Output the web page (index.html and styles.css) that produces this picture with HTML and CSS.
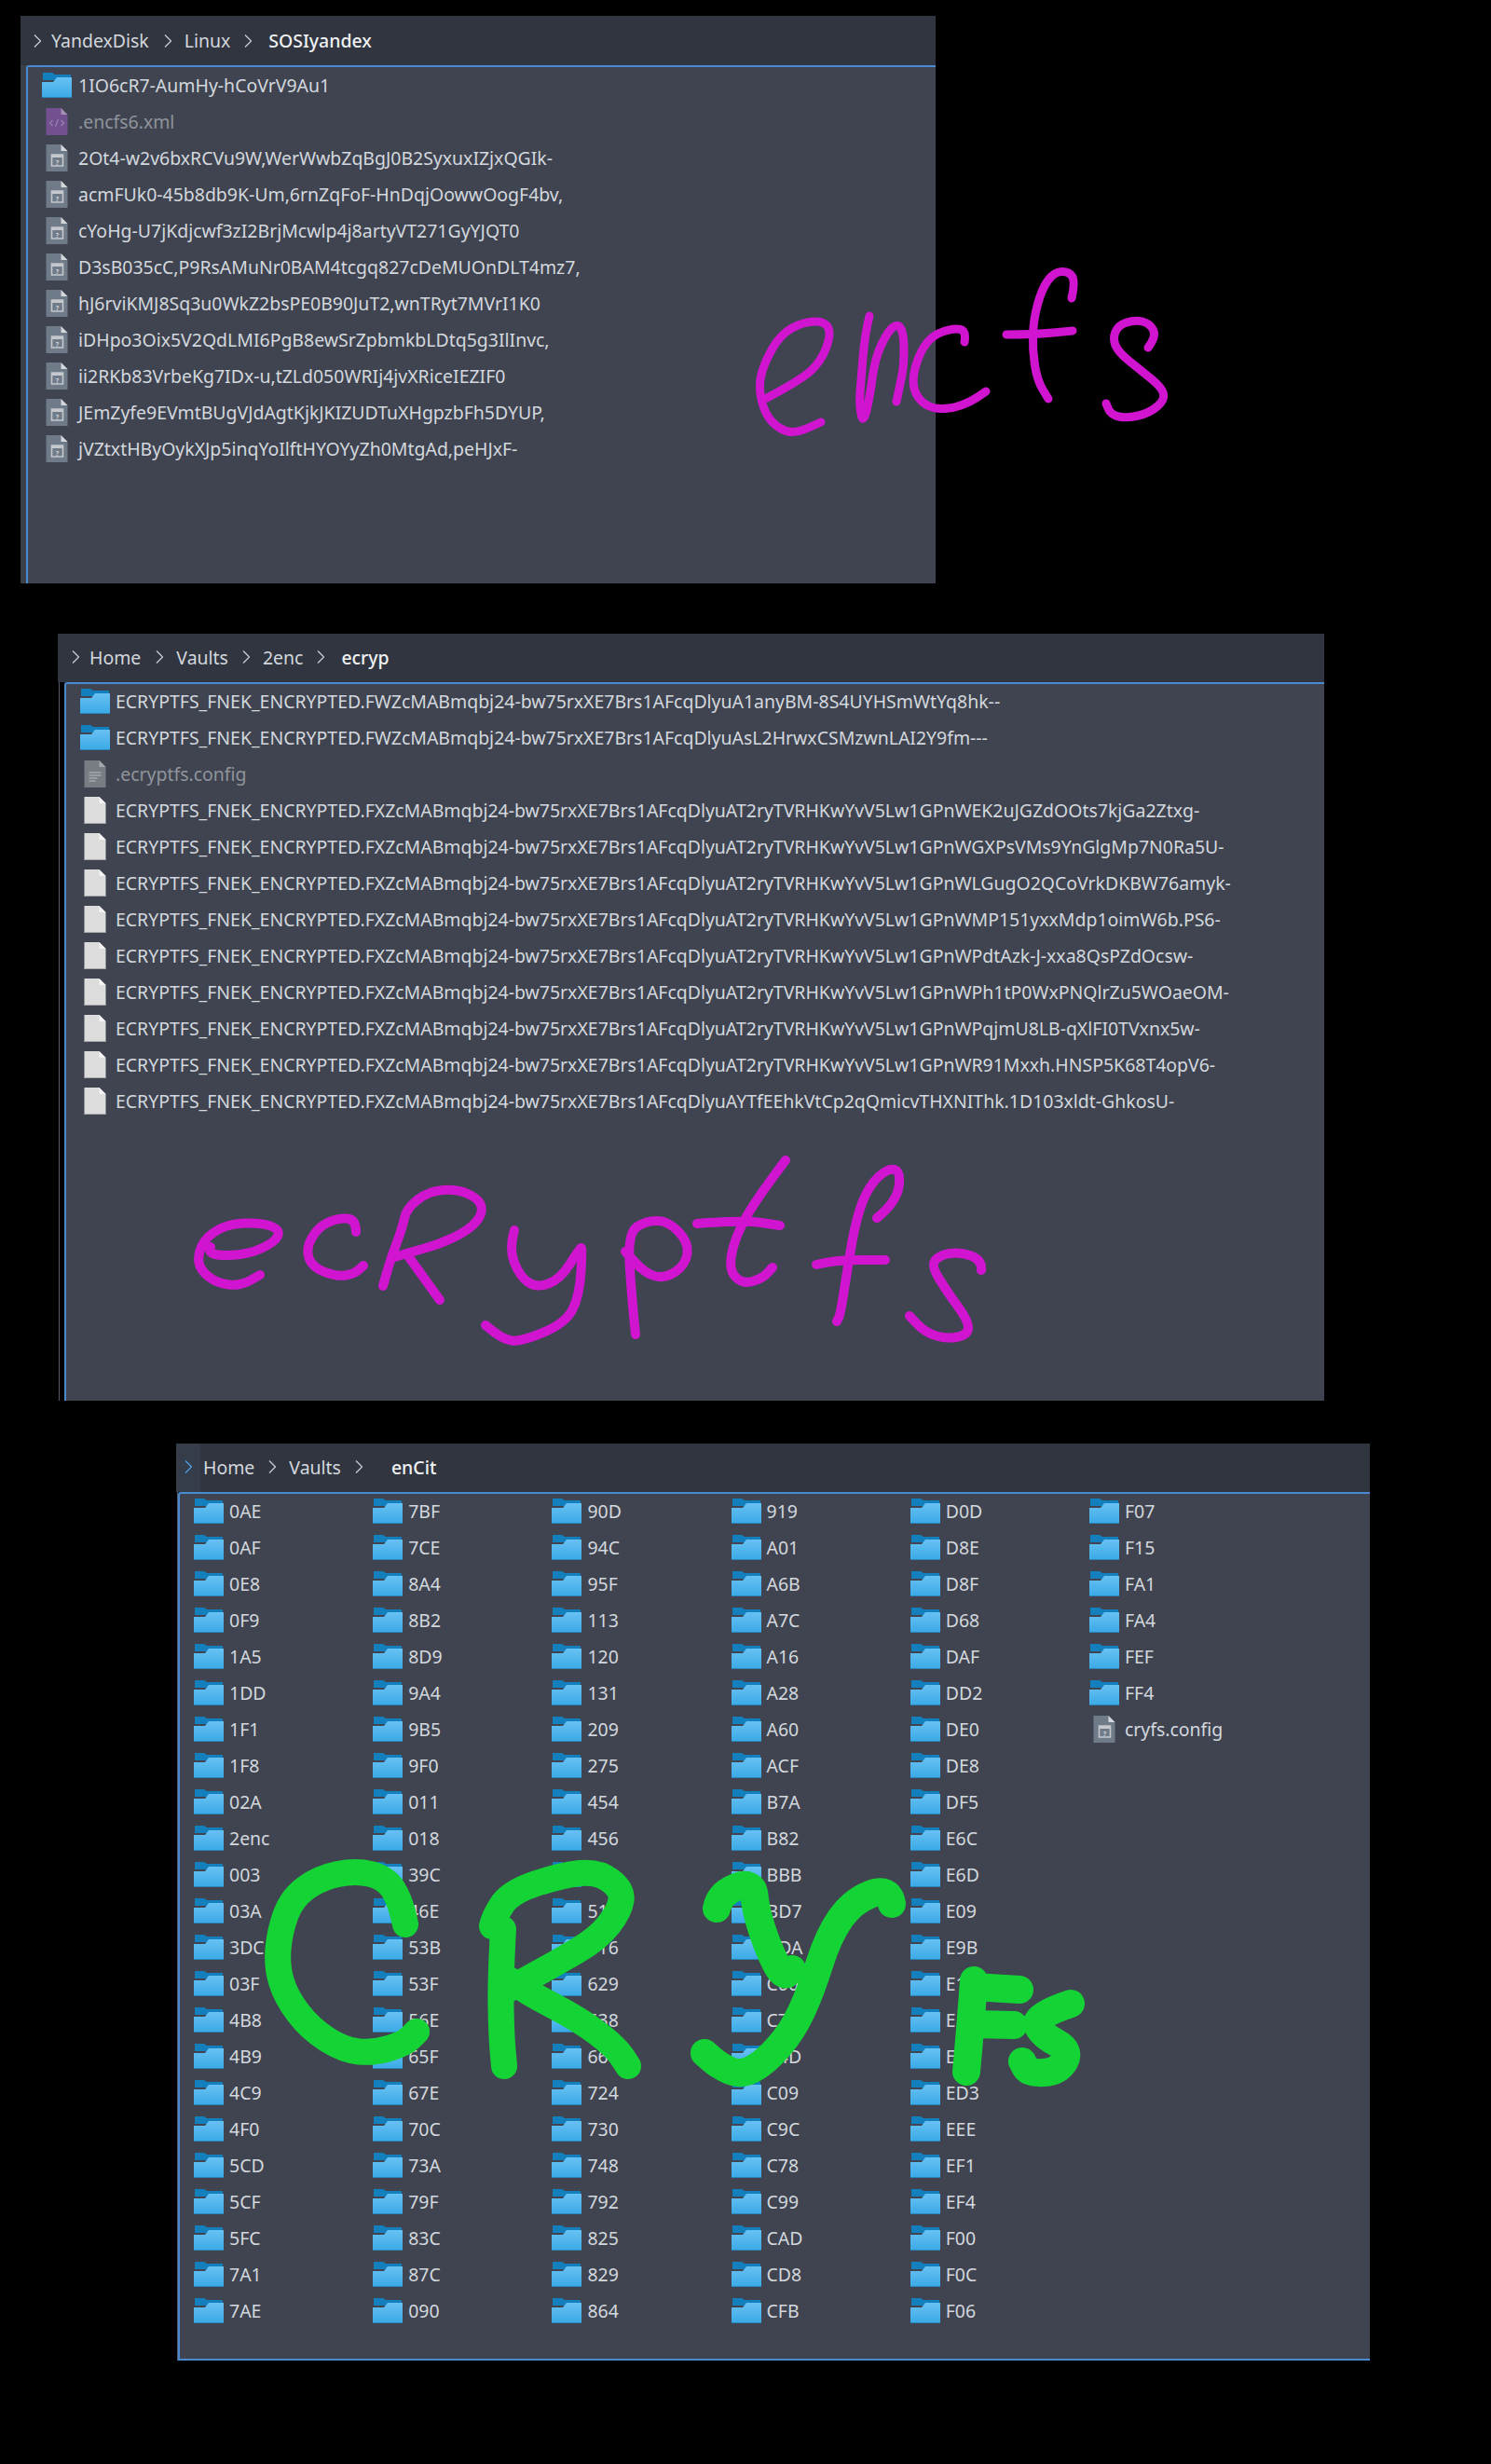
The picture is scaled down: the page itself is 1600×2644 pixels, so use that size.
FILE: index.html
```html
<!DOCTYPE html>
<html lang="en">

<head>
  <meta charset="UTF-8" />
  <title>encfs ecryptfs cryfs</title>
  <link rel="stylesheet" href="styles.css">
</head>

<body>
  <svg class="defs" width="0" height="0">
    <defs>
      <linearGradient id="folder-front" x1="0" y1="0" x2="0" y2="1">
        <stop offset="0" stop-color="#68c1f3" />
        <stop offset="1" stop-color="#3aa9e6" />
      </linearGradient>
      <symbol id="folder" viewBox="0 0 32 27">
        <path d="M1 0H11L14 2H31V8H1Z" fill="#147fbd" />
        <path d="M0 10H12L16 5H32V27H0Z" fill="url(#folder-front)" />
        <path d="M0 26H32V27H0Z" fill="#2b86bb" />
      </symbol>
      <symbol id="file-unknown" viewBox="0 0 23 29">
        <path d="M0 0H16L23 7V29H0Z" fill="#6f7b89" />
        <path d="M16 0L23 7H16Z" fill="#d3d6da" />
        <path d="M6 11H18V23H6Z" fill="none" stroke="#c4c8cd" stroke-width="1.6" />
        <path d="M6 11H18V14H6Z" fill="#c4c8cd" />
        <text x="12" y="21.5" font-size="7" font-weight="700" text-anchor="middle" fill="#d3d6da" font-family="Noto Sans, sans-serif">?</text>
      </symbol>
      <symbol id="file-xml" viewBox="0 0 23 29">
        <path d="M0 0H16L23 7V29H0Z" fill="#73508f" />
        <path d="M16 0L23 7H16Z" fill="#a48fb6" />
        <path d="M7 13L4 16L7 19M16 13L19 16L16 19M13 12L10 20" fill="none" stroke="#9a80ae" stroke-width="1.2" />
      </symbol>
      <symbol id="file-text" viewBox="0 0 23 29">
        <path d="M0 0H16L23 7V29H0Z" fill="#787c83" />
        <path d="M16 0L23 7H16Z" fill="#a5a8ad" />
        <path d="M5 13H18M5 16H18M5 19H14M5 22H12" fill="none" stroke="#a5a8ad" stroke-width="1.4" />
      </symbol>
      <symbol id="file-blank" viewBox="0 0 23 29">
        <path d="M0 0H16L23 7V29H0Z" fill="#dcdcdc" />
        <path d="M16 0L23 7H16Z" fill="#f4f4f4" />
        <path d="M0 28H23V29H0Z" fill="#a9aaac" />
      </symbol>
      <symbol id="chev" viewBox="0 0 8 16">
        <path d="M1 1.5L7.5 8L1 14.5" fill="none" stroke="currentColor" stroke-width="1.4" />
      </symbol>
    </defs>
  </svg>

  <svg class="sketch" width="1600" height="2644"></svg>

  <section class="win win-encfs">
    <div class="crumbs">
      <svg class="chev"><use href="#chev" /></svg><span>YandexDisk</span>
      <svg class="chev"><use href="#chev" /></svg><span>Linux</span>
      <svg class="chev"><use href="#chev" /></svg><b>SOSIyandex</b>
    </div>
    <ul class="view">
      <li><svg class="ico"><use href="#folder" /></svg>1IO6cR7-AumHy-hCoVrV9Au1</li>
      <li class="hidden-file"><svg class="ico ico-file"><use href="#file-xml" /></svg>.encfs6.xml</li>
      <li><svg class="ico ico-file"><use href="#file-unknown" /></svg>2Ot4-w2v6bxRCVu9W,WerWwbZqBgJ0B2SyxuxIZjxQGIk-</li>
      <li><svg class="ico ico-file"><use href="#file-unknown" /></svg>acmFUk0-45b8db9K-Um,6rnZqFoF-HnDqjOowwOogF4bv,</li>
      <li><svg class="ico ico-file"><use href="#file-unknown" /></svg>cYoHg-U7jKdjcwf3zI2BrjMcwlp4j8artyVT271GyYJQT0</li>
      <li><svg class="ico ico-file"><use href="#file-unknown" /></svg>D3sB035cC,P9RsAMuNr0BAM4tcgq827cDeMUOnDLT4mz7,</li>
      <li><svg class="ico ico-file"><use href="#file-unknown" /></svg>hJ6rviKMJ8Sq3u0WkZ2bsPE0B90JuT2,wnTRyt7MVrI1K0</li>
      <li><svg class="ico ico-file"><use href="#file-unknown" /></svg>iDHpo3Oix5V2QdLMI6PgB8ewSrZpbmkbLDtq5g3IlInvc,</li>
      <li><svg class="ico ico-file"><use href="#file-unknown" /></svg>ii2RKb83VrbeKg7IDx-u,tZLd050WRIj4jvXRiceIEZIF0</li>
      <li><svg class="ico ico-file"><use href="#file-unknown" /></svg>JEmZyfe9EVmtBUgVJdAgtKjkJKIZUDTuXHgpzbFh5DYUP,</li>
      <li><svg class="ico ico-file"><use href="#file-unknown" /></svg>jVZtxtHByOykXJp5inqYoIlftHYOYyZh0MtgAd,peHJxF-</li>
    </ul>
  </section>

  <section class="win win-ecrypt">
    <div class="crumbs">
      <svg class="chev"><use href="#chev" /></svg><span>Home</span>
      <svg class="chev"><use href="#chev" /></svg><span>Vaults</span>
      <svg class="chev"><use href="#chev" /></svg><span>2enc</span>
      <svg class="chev"><use href="#chev" /></svg><b>ecryp</b>
    </div>
    <ul class="view">
      <li><svg class="ico"><use href="#folder" /></svg>ECRYPTFS_FNEK_ENCRYPTED.FWZcMABmqbj24-bw75rxXE7Brs1AFcqDlyuA1anyBM-8S4UYHSmWtYq8hk--</li>
      <li><svg class="ico"><use href="#folder" /></svg>ECRYPTFS_FNEK_ENCRYPTED.FWZcMABmqbj24-bw75rxXE7Brs1AFcqDlyuAsL2HrwxCSMzwnLAI2Y9fm---</li>
      <li class="hidden-file"><svg class="ico ico-file"><use href="#file-text" /></svg>.ecryptfs.config</li>
      <li><svg class="ico ico-file"><use href="#file-blank" /></svg>ECRYPTFS_FNEK_ENCRYPTED.FXZcMABmqbj24-bw75rxXE7Brs1AFcqDlyuAT2ryTVRHKwYvV5Lw1GPnWEK2uJGZdOOts7kjGa2Ztxg-</li>
      <li><svg class="ico ico-file"><use href="#file-blank" /></svg>ECRYPTFS_FNEK_ENCRYPTED.FXZcMABmqbj24-bw75rxXE7Brs1AFcqDlyuAT2ryTVRHKwYvV5Lw1GPnWGXPsVMs9YnGlgMp7N0Ra5U-</li>
      <li><svg class="ico ico-file"><use href="#file-blank" /></svg>ECRYPTFS_FNEK_ENCRYPTED.FXZcMABmqbj24-bw75rxXE7Brs1AFcqDlyuAT2ryTVRHKwYvV5Lw1GPnWLGugO2QCoVrkDKBW76amyk-</li>
      <li><svg class="ico ico-file"><use href="#file-blank" /></svg>ECRYPTFS_FNEK_ENCRYPTED.FXZcMABmqbj24-bw75rxXE7Brs1AFcqDlyuAT2ryTVRHKwYvV5Lw1GPnWMP151yxxMdp1oimW6b.PS6-</li>
      <li><svg class="ico ico-file"><use href="#file-blank" /></svg>ECRYPTFS_FNEK_ENCRYPTED.FXZcMABmqbj24-bw75rxXE7Brs1AFcqDlyuAT2ryTVRHKwYvV5Lw1GPnWPdtAzk-J-xxa8QsPZdOcsw-</li>
      <li><svg class="ico ico-file"><use href="#file-blank" /></svg>ECRYPTFS_FNEK_ENCRYPTED.FXZcMABmqbj24-bw75rxXE7Brs1AFcqDlyuAT2ryTVRHKwYvV5Lw1GPnWPh1tP0WxPNQlrZu5WOaeOM-</li>
      <li><svg class="ico ico-file"><use href="#file-blank" /></svg>ECRYPTFS_FNEK_ENCRYPTED.FXZcMABmqbj24-bw75rxXE7Brs1AFcqDlyuAT2ryTVRHKwYvV5Lw1GPnWPqjmU8LB-qXlFI0TVxnx5w-</li>
      <li><svg class="ico ico-file"><use href="#file-blank" /></svg>ECRYPTFS_FNEK_ENCRYPTED.FXZcMABmqbj24-bw75rxXE7Brs1AFcqDlyuAT2ryTVRHKwYvV5Lw1GPnWR91Mxxh.HNSP5K68T4opV6-</li>
      <li><svg class="ico ico-file"><use href="#file-blank" /></svg>ECRYPTFS_FNEK_ENCRYPTED.FXZcMABmqbj24-bw75rxXE7Brs1AFcqDlyuAYTfEEhkVtCp2qQmicvTHXNIThk.1D103xldt-GhkosU-</li>
    </ul>
  </section>

  <section class="win win-cry">
    <div class="crumbs">
      <svg class="chev chev-on"><use href="#chev" /></svg><span>Home</span>
      <svg class="chev"><use href="#chev" /></svg><span>Vaults</span>
      <svg class="chev"><use href="#chev" /></svg><b>enCit</b>
    </div>
    <ul class="view grid" id="cry-grid"></ul>
  </section>

  <script src="sketch.js"></script>
</body>

</html>
```

FILE: styles.css
```css
* {
  box-sizing: border-box;
}

body {
  margin: 0;
  min-height: 2644px;
  position: relative;
  overflow-x: hidden;
  background: #000;
  font-family: "Noto Sans", sans-serif;
  font-size: 19.47px;
  color: #d3d8de;
}

.defs {
  position: absolute;
}

.sketch {
  position: absolute;
  left: 0;
  top: 0;
  z-index: 2;
}

.win {
  display: flex;
  flex-direction: column;
}

.win-encfs {
  width: 982px;
  height: 609px;
  margin: 17px 0 0 22px;
  background: #3a3f4a;
}

/* thin grey line left of the view on the other two windows */
.win-ecrypt {
  width: 1359px;
  height: 823px;
  margin: 54px 0 0 62px;
  background: linear-gradient(to right, transparent 1px, #555a63 1px, #555a63 2px, transparent 2px);
}

.win-cry {
  width: 1281px;
  height: 984px;
  margin: 46px 0 0 189px;
  background: linear-gradient(to right, transparent 1px, #555a63 1px, #555a63 2px, transparent 2px);
}

.crumbs {
  height: 53px;
  flex: none;
  display: flex;
  align-items: center;
  padding-left: 14px;
  background: #31353f;
}

.win-ecrypt .crumbs {
  height: 52px;
  padding: 0 0 2px 15px;
}

.win-cry .crumbs {
  height: 52px;
  padding: 0 0 2px 9px;
  background: linear-gradient(to right, #363d4a 26px, #31353f 26px);
}

.crumbs span {
  margin: 0 15px 0 14px;
}

.crumbs .chev:first-child + span {
  margin: 0 16px 0 11px;
}

.win-cry .crumbs .chev:first-child + span {
  margin: 0 15px 0 12px;
}

.crumbs b {
  margin-left: 18px;
  font-weight: 500;
  color: #eff2f5;
}

.win-cry .crumbs b {
  margin-left: 31px;
}

.chev {
  width: 8px;
  height: 16px;
  flex: none;
  color: #c2c7cd;
}

.chev-on {
  color: #4d9be0;
}

.view {
  flex: 1;
  margin: 0 0 0 6px;
  padding: 0;
  list-style: none;
  background: #3f4450;
  border-top: 2px solid #4a8ad0;
  border-left: 2px solid #4a8ad0;
  border-top-left-radius: 3px;
}

.win-cry .view {
  margin-left: 2px;
  border-bottom: 2px solid #4a8ad0;
}

.win-ecrypt .view {
  margin-left: 7px;
}

.view li {
  height: 39px;
  display: flex;
  align-items: center;
  gap: 7px;
  padding-left: 15px;
  white-space: nowrap;
}

.win-ecrypt .view li,
.win-cry .view li {
  gap: 6px;
  padding-bottom: 2px;
}

.ico {
  width: 32px;
  height: 27px;
  flex: none;
}

.ico-file {
  height: 29px;
}

.hidden-file {
  color: #8f949b;
}

.grid {
  display: grid;
  grid-auto-flow: column;
  grid-template-rows: repeat(23, 39px);
  grid-auto-columns: 192.2px;
}
```

FILE: sketch.js
```js
// cryfs folder list, one array per column
const cryColumns = [
  '0AE 0AF 0E8 0F9 1A5 1DD 1F1 1F8 02A 2enc 003 03A 3DC 03F 4B8 4B9 4C9 4F0 5CD 5CF 5FC 7A1 7AE',
  '7BF 7CE 8A4 8B2 8D9 9A4 9B5 9F0 011 018 39C 46E 53B 53F 56E 65F 67E 70C 73A 79F 83C 87C 090',
  '90D 94C 95F 113 120 131 209 275 454 456 490 513 516 629 638 664 724 730 748 792 825 829 864',
  '919 A01 A6B A7C A16 A28 A60 ACF B7A B82 BBB BD7 BDA C00 C7B C4D C09 C9C C78 C99 CAD CD8 CFB',
  'D0D D8E D8F D68 DAF DD2 DE0 DE8 DF5 E6C E6D E09 E9B E1A E1F E2D ED3 EEE EF1 EF4 F00 F0C F06',
  'F07 F15 FA1 FA4 FEF FF4'
]

const grid = document.querySelector('#cry-grid')
const names = cryColumns.join(' ').split(' ')
names.forEach(function (name) {
  grid.insertAdjacentHTML('beforeend', `<li><svg class="ico"><use href="#folder" /></svg>${name}</li>`)
})
grid.insertAdjacentHTML('beforeend', '<li><svg class="ico ico-file"><use href="#file-unknown" /></svg>cryfs.config</li>')

// handwriting, traced from the picture as x,y lists
const magenta = '#d014d0'
const green = '#14d435'
const strokes = [
  // encfs
  [magenta, 9, [823,427, 859,408, 881,388, 892,359, 886,345, 863,345, 837,359, 819,392, 814,416, 821,445, 837,461, 854,465, 881,453]],
  [magenta, 9, [933,339, 928,359, 924,408, 922,433, 926,455, 933,429, 939,384, 953,355, 964,347, 970,359, 970,392, 966,412, 962,431]],
  [magenta, 9, [1035,367, 1037,355, 1024,352, 1002,359, 988,376, 979,404, 982,424, 997,438, 1020,439, 1042,431, 1058,420]],
  [magenta, 9, [1150,320, 1154,302, 1147,291, 1131,292, 1118,310, 1109,343, 1108,376, 1113,408, 1125,428]],
  [magenta, 9, [1080,359, 1109,359, 1151,355]],
  [magenta, 9, [1232,373, 1241,361, 1234,347, 1218,343, 1200,349, 1194,363, 1200,378, 1225,398, 1247,416, 1250,429, 1234,443, 1209,449, 1192,445, 1187,433]],
  // ecryptfs
  [magenta, 10, [226,1338, 221,1347, 264,1347, 295,1333, 301,1320, 282,1312, 246,1313, 221,1327, 212,1347, 215,1363, 233,1377, 258,1380, 279,1368]],
  [magenta, 10, [382,1322, 382,1308, 362,1307, 341,1317, 328,1340, 335,1360, 362,1370, 380,1367, 390,1358]],
  [magenta, 10, [411,1380, 417,1357, 432,1317, 436,1297, 460,1278, 491,1276, 515,1287, 518,1303, 503,1320, 472,1335, 436,1345, 420,1350]],
  [magenta, 10, [436,1345, 472,1395]],
  [magenta, 10, [552,1320, 546,1340, 558,1370, 576,1382, 601,1373, 622,1340, 625,1338, 622,1390, 607,1420, 558,1440, 540,1437, 521,1422]],
  [magenta, 10, [682,1432, 677,1383, 674,1323, 693,1310, 717,1310, 739,1333, 736,1357, 714,1372, 693,1367, 671,1343]],
  [magenta, 10, [843,1245, 809,1290, 788,1330, 782,1363, 797,1378, 818,1372, 829,1360]],
  [magenta, 10, [748,1313, 797,1309, 837,1315]],
  [magenta, 10, [941,1307, 962,1290, 967,1257, 953,1253, 932,1273, 919,1307, 910,1357, 902,1410, 898,1418]],
  [magenta, 10, [876,1357, 895,1352, 950,1352]],
  [magenta, 10, [1053,1363, 1054,1352, 1030,1343, 1008,1347, 999,1358, 1017,1387, 1039,1417, 1039,1432, 1017,1437, 993,1430, 976,1412]],
  // cryfs
  [green, 28, [435,2065, 430,2040, 414,2015, 382,2007, 343,2015, 313,2037, 300,2073, 297,2110, 307,2143, 333,2177, 369,2200, 401,2203, 434,2193, 447,2180]],
  [green, 28, [528,2067, 530,2057, 548,2030, 603,2012, 642,2008, 668,2028, 665,2050, 642,2080, 596,2107, 545,2135]],
  [green, 28, [540,2070, 537,2123, 538,2183, 541,2217]],
  [green, 28, [548,2125, 564,2137, 622,2167, 661,2197, 674,2217]],
  [green, 30, [769,2048, 772,2032, 808,2018, 811,2050, 824,2090, 840,2122, 850,2113]],
  [green, 30, [957,2043, 954,2025, 915,2040, 889,2077, 870,2137, 850,2180, 821,2213, 795,2227, 772,2217, 756,2203]],
  [green, 30, [1045,2125, 1042,2167, 1037,2223]],
  [green, 30, [1045,2132, 1094,2135]],
  [green, 30, [1042,2172, 1088,2173]],
  [green, 30, [1149,2150, 1110,2163, 1117,2183, 1149,2200, 1136,2223, 1104,2225, 1097,2212]]
]

// round off the traced points with quadratic curves through the midpoints
function smooth(p) {
  let d = `M${p[0]} ${p[1]}`
  for (let i = 2; i < p.length - 2; i += 2) {
    const mx = (p[i] + p[i + 2]) / 2
    const my = (p[i + 1] + p[i + 3]) / 2
    d += `Q${p[i]} ${p[i + 1]} ${mx} ${my}`
  }
  return d + `L${p[p.length - 2]} ${p[p.length - 1]}`
}

const sketch = document.querySelector('.sketch')
strokes.forEach(function (s) {
  const path = document.createElementNS('http://www.w3.org/2000/svg', 'path')
  path.setAttribute('d', smooth(s[2]))
  path.setAttribute('fill', 'none')
  path.setAttribute('stroke', s[0])
  path.setAttribute('stroke-width', s[1])
  path.setAttribute('stroke-linecap', 'round')
  path.setAttribute('stroke-linejoin', 'round')
  sketch.appendChild(path)
})
```
